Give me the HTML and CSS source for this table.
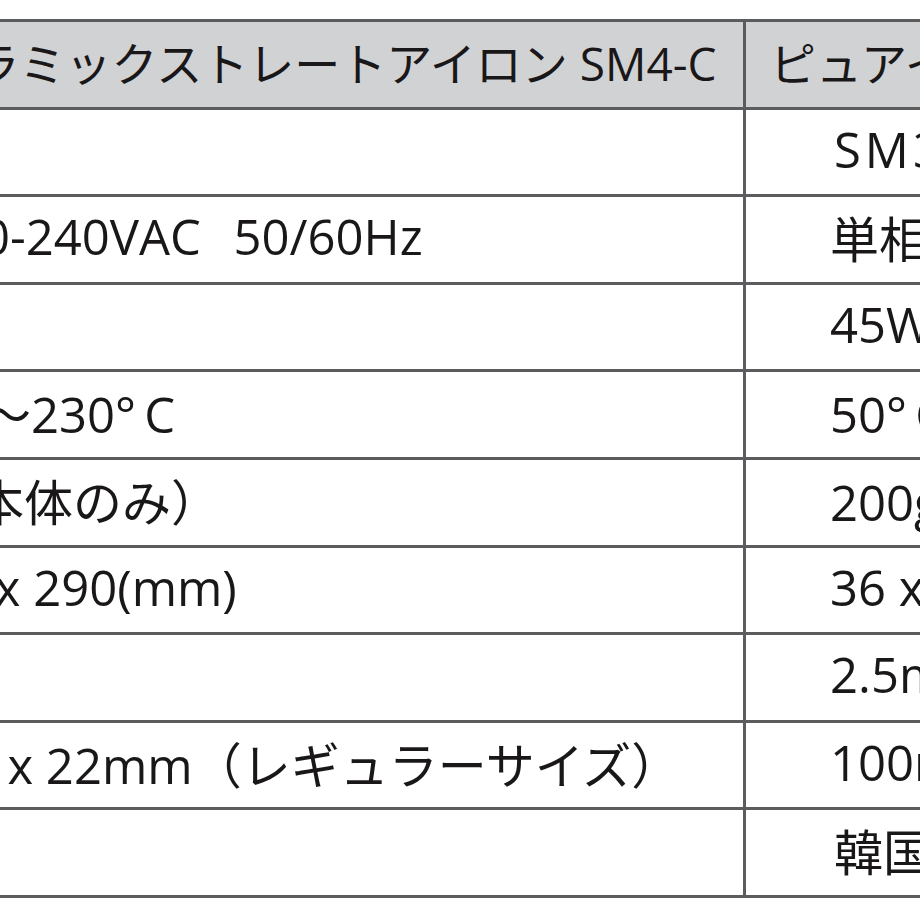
FILE: index.html
```html
<!DOCTYPE html>
<html lang="ja">
<head>
<meta charset="utf-8">
<title>仕様比較</title>
<link rel="stylesheet" href="styles.css">
</head>
<body>
<div class="page">
  <div class="spec">
    <div class="cell head left">セラミックストレートアイロン SM4-C</div>
    <div class="cell head right">ピュアイオンストレートアイロン SM3</div>

    <div class="cell left"></div>
    <div class="cell right spaced">SM3-P</div>

    <div class="cell left">100-240VAC&ensp;&thinsp;50/60Hz</div>
    <div class="cell right">単相 AC100V 50/60Hz</div>

    <div class="cell left"></div>
    <div class="cell right">45W</div>

    <div class="cell left">80〜230°&thinsp;C</div>
    <div class="cell right">50°&thinsp;C 〜 230°&thinsp;C</div>

    <div class="cell left">（本体のみ）</div>
    <div class="cell right">200g（本体のみ）</div>

    <div class="cell left">28 x 290(mm)</div>
    <div class="cell right">36 x 42 x 280(mm)</div>

    <div class="cell left"></div>
    <div class="cell right">2.5m</div>

    <div class="cell left">91&nbsp; x 22mm（レギュラーサイズ）</div>
    <div class="cell right">100mm x 25mm</div>

    <div class="cell left"></div>
    <div class="cell right country">韓国製</div>
  </div>
</div>
</body>
</html>
```
FILE: styles.css
```css
html, body {
  margin: 0;
  padding: 0;
  overflow: hidden;
  background: #ffffff;
}

.page {
  padding-top: 19px;
}

.spec {
  display: grid;
  grid-template-columns: 845px 800px;
  margin-left: -99px;
  font-family: "Open Sans", "Noto Sans CJK JP", sans-serif;
  font-size: 49px;
  font-weight: 400;
  color: #1a1718;
}

.cell {
  box-sizing: border-box;
  height: 87.6px;
  padding-bottom: 6px;
  border-bottom: 3px solid #5b5c5e;
  display: flex;
  align-items: center;
  white-space: nowrap;
  overflow: hidden;
}

.left {
  border-right: 3px solid #5b5c5e;
  padding-left: 25px;
}

.right {
  padding-left: 84px;
}

.head {
  height: 90.6px;
  border-top: 3px solid #5b5c5e;
  background: #d1d2d4;
  font-size: 46px;
}

.head.left {
  justify-content: center;
  padding-left: 0;
}

.head.right {
  padding-left: 24px;
}

.spaced {
  letter-spacing: 4px;
  padding-left: 88px;
}

.country {
  padding-left: 88px;
}
```
